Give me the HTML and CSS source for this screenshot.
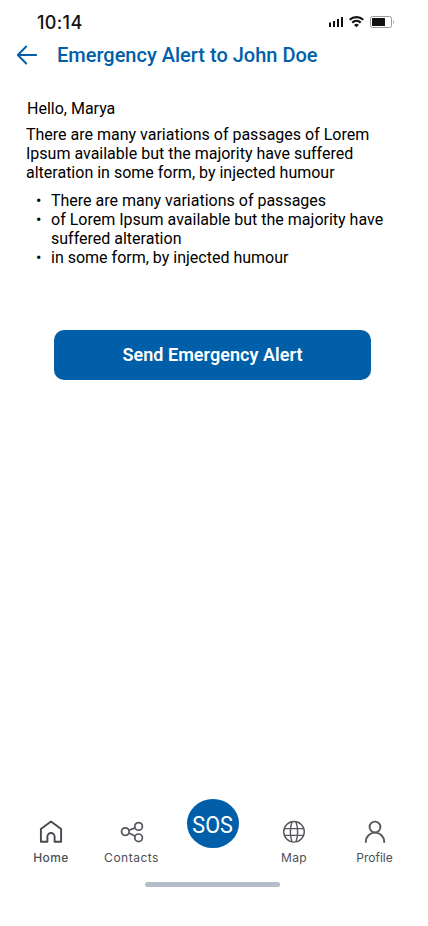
FILE: index.html
```html
<!DOCTYPE html>
<html lang="en">
<head>
<meta charset="utf-8">
<meta name="viewport" content="width=device-width, initial-scale=1">
<title>Emergency Alert</title>
<link rel="stylesheet" href="styles.css">
</head>
<body>
<div class="screen">
  <div class="status">
    <span class="time">10:14</span>
    <svg class="status-icons" width="68" height="16" viewBox="0 0 68 16">
      <g fill="#111">
        <rect x="1" y="8.500" width="2" height="4.500"/>
        <rect x="5" y="7" width="2" height="6"/>
        <rect x="9" y="5" width="2" height="8"/>
        <rect x="13" y="3" width="2" height="10"/>
        <path d="M26 11a3.400 3.400 0 0 1 4.900 0L28.450 13.300z"/>
      </g>
      <path d="M21.700 6.400a10 10 0 0 1 13.500 0M24.200 9.200a6.300 6.300 0 0 1 8.500 0" transform="translate(0 -.6)" fill="none" stroke="#111" stroke-width="2.200"/>
      <rect x="42.500" y="2.500" width="21" height="11" rx="2" fill="none" stroke="#999"/>
      <rect x="44" y="4" width="13" height="8" rx=".5" fill="#111"/>
      <path d="M65 6c1.400.6 1.400 3.400 0 4z" fill="#aaa"/>
    </svg>
  </div>
  <header class="header">
    <svg class="back" width="22" height="20" viewBox="0 0 22 20" fill="none" stroke="#005fa8" stroke-width="1.900" stroke-linecap="round" stroke-linejoin="round"><path d="M20.200 10H1.800M10.200 1.500 1.800 10l8.400 8.500"/></svg>
    <h1>Emergency Alert to John Doe</h1>
  </header>
  <main class="message">
    <p class="greeting">Hello, Marya</p>
    <p class="intro">There are many variations of passages of Lorem<br>Ipsum available but the majority have suffered<br>alteration in some form, by injected humour</p>
    <ul>
      <li>There are many variations of passages</li>
      <li><span>of Lorem Ipsum available but the majority have<br>suffered alteration</span></li>
      <li>in some form, by injected humour</li>
    </ul>
    <button class="send" type="button">Send Emergency Alert</button>
  </main>
  <nav class="tabs">
    <a class="tab home">
      <svg width="24" height="24" viewBox="0 0 24 24" fill="none" stroke="#46484f" stroke-width="1.900" stroke-linejoin="round"><path d="M1.900 9.100 12 1.600l10.100 7.500v12.700h-6.500v-5.200a3.600 3.600 0 0 0-7.200 0v5.200H1.900z"/></svg>
      <span>Home</span>
    </a>
    <a class="tab contacts">
      <svg width="24" height="24" viewBox="0 0 24 24" fill="none" stroke="#54565c" stroke-width="1.700"><circle cx="5.300" cy="11.600" r="3.800"/><circle cx="18.600" cy="6.400" r="3.800"/><circle cx="18.600" cy="17.800" r="3.800"/><path d="m8.900 10.300 6.100-2.400M8.800 13l6.300 3"/></svg>
      <span>Contacts</span>
    </a>
    <a class="sos"><span>SOS</span></a>
    <a class="tab map">
      <svg width="24" height="24" viewBox="0 0 24 24" fill="none" stroke="#55575c" stroke-width="1.400"><circle cx="12" cy="11.800" r="10.300"/><path d="M10 1.800C7.900 8.300 7.900 15.300 10 21.800M14 1.800c2.100 6.500 2.100 13.500 0 20M2.200 8.600h19.600M2.200 15.400h19.600"/></svg>
      <span>Map</span>
    </a>
    <a class="tab profile">
      <svg width="24" height="24" viewBox="0 0 24 24" fill="none" stroke="#55575c" stroke-width="1.900"><circle cx="12" cy="7" r="5.400"/><path d="M2.800 22.800v-1a9.200 9.200 0 0 1 18.400 0v1"/></svg>
      <span>Profile</span>
    </a>
  </nav>
  <div class="indicator"></div>
</div>
</body>
</html>
```

FILE: styles.css
```css
*, *::before { box-sizing: border-box; }
body { margin: 0; background: #fff; }
.screen {
  width: 428px;
  height: 926px;
  display: flex;
  flex-direction: column;
  font-family: Roboto, sans-serif;
  color: #000;
}
.status {
  height: 40px;
  padding: 12px 32px 0 37px;
  display: flex;
  justify-content: space-between;
  align-items: flex-start;
}
.time {
  font: 500 18px/22px Inter, sans-serif;
  letter-spacing: 0.35px;
  color: #111;
}
.status-icons { margin-top: 2px; }
.header {
  height: 30px;
  padding-left: 16px;
  display: flex;
  align-items: center;
  gap: 19px;
}
h1 {
  margin: 0;
  font-size: 20px;
  font-weight: 500;
  line-height: 24px;
  color: #005fa8;
}
.message {
  padding: 29px 26px 0;
  display: flex;
  flex-direction: column;
  font-size: 16px;
  line-height: 19px;
}
p { margin: 0; }
.greeting { padding-left: 1px; margin-bottom: 7px; }
ul {
  margin: 9px 0 0;
  padding: 0;
  list-style: none;
}
li { display: flex; }
li::before {
  content: "•";
  flex: 0 0 25px;
  padding-left: 10px;
  font-size: 16px;
}
.send {
  width: 317px;
  height: 50px;
  margin: 63px 0 0 28px;
  padding: 0 0 2px;
  border: 0;
  border-radius: 10px;
  background: #005fa8;
  color: #fff;
  font: 600 18px/21px Roboto, sans-serif;
  letter-spacing: 0.05px;
}
.tabs {
  height: 84px;
  margin-top: auto;
  padding: 0 11px;
  display: grid;
  grid-template-columns: 80px 81px 82px 80px 81px;
}
.tab {
  display: flex;
  flex-direction: column;
  align-items: center;
  gap: 5px;
  padding-top: 21px;
  font: 400 12px/18px Inter, sans-serif;
  color: #4d4f55;
}
.home { font-weight: 500; letter-spacing: 0.4px; }
.contacts { letter-spacing: 0.5px; }
.map { letter-spacing: 0.4px; }
.sos {
  width: 52px;
  height: 49px;
  margin-left: 15px;
  padding-top: 4px;
  border-radius: 50%;
  background: #005fa8;
  color: #fff;
  display: flex;
  align-items: center;
  justify-content: center;
  font: 400 23px/24px Roboto, sans-serif;
}
.sos span { transform: scaleX(0.94); }
.indicator {
  width: 135px;
  height: 5px;
  margin: -1px 0 39px 145px;
  border-radius: 3px;
  background: #b6bdca;
}
```
